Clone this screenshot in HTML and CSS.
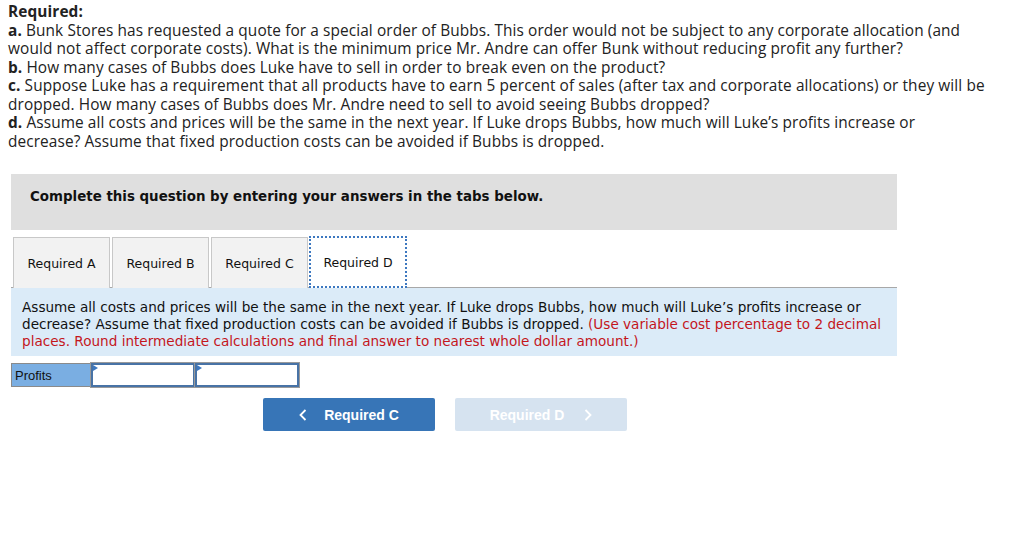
FILE: index.html
```html
<!DOCTYPE html>
<html>
<head>
<meta charset="utf-8">
<link rel="stylesheet" href="styles.css">
</head>
<body>
<div class="question">
  <div class="req-title">Required:</div>
  <div><b>a.</b> Bunk Stores has requested a quote for a special order of Bubbs. This order would not be subject to any corporate allocation (and would not affect corporate costs). What is the minimum price Mr. Andre can offer Bunk without reducing profit any further?</div>
  <div><b>b.</b> How many cases of Bubbs does Luke have to sell in order to break even on the product?</div>
  <div><b>c.</b> Suppose Luke has a requirement that all products have to earn 5 percent of sales (after tax and corporate allocations) or they will be dropped. How many cases of Bubbs does Mr. Andre need to sell to avoid seeing Bubbs dropped?</div>
  <div><b>d.</b> Assume all costs and prices will be the same in the next year. If Luke drops Bubbs, how much will Luke’s profits increase or decrease? Assume that fixed production costs can be avoided if Bubbs is dropped.</div>
</div>

<div class="panel">
  <div class="instructions">Complete this question by entering your answers in the tabs below.</div>
  <div class="tabs">
    <div class="tab">Required A</div>
    <div class="tab">Required B</div>
    <div class="tab">Required C</div>
    <div class="tab active">Required D</div>
  </div>
  <div class="prompt">Assume all costs and prices will be the same in the next year. If Luke drops Bubbs, how much will Luke’s profits increase or decrease? Assume that fixed production costs can be avoided if Bubbs is dropped. <span class="red">(Use variable cost percentage to 2 decimal places. Round intermediate calculations and final answer to nearest whole dollar amount.)</span></div>
  <div class="answer-row">
    <div class="label-cell">Profits</div>
    <div class="input-cell"><span class="flag"></span></div>
    <div class="input-cell"><span class="flag"></span></div>
  </div>
  <div class="nav">
    <div class="btn prev"><svg class="chev" width="8" height="12" viewBox="0 0 8 12"><path d="M6.5 1 L1.5 6 L6.5 11" fill="none" stroke="#ffffff" stroke-width="1.8"/></svg>Required C</div>
    <div class="btn next">Required D<svg class="chev right" width="8" height="12" viewBox="0 0 8 12"><path d="M1.5 1 L6.5 6 L1.5 11" fill="none" stroke="#ffffff" stroke-width="1.8"/></svg></div>
  </div>
</div>
</body>
</html>
```
FILE: styles.css
```css
html, body {
  margin: 0;
  padding: 0;
  background: #ffffff;
}
body {
  padding: 3px 8px 0 8px;
}
.question {
  font-family: "Open Sans", "Lato", sans-serif;
  font-size: 15.4px;
  line-height: 18.5px;
  letter-spacing: 0.1px;
  color: #222222;
  width: 980px;
}
.question b, .req-title {
  font-weight: bold;
}
.panel {
  margin-top: 23px;
  margin-left: 3px;
  width: 886px;
}
.instructions {
  background: #dfdfdf;
  height: 56px;
  box-sizing: border-box;
  padding: 14px 0 0 19px;
  font-family: "DejaVu Sans", Verdana, sans-serif;
  font-size: 13.4px;
  line-height: 17px;
  font-weight: bold;
  color: #111111;
}
.tabs {
  margin-top: 7px;
  display: flex;
  gap: 2px;
  padding-left: 2px;
  border-bottom: 1px solid #a8a8a8;
  height: 50px;
}
.tab {
  width: 97px;
  box-sizing: border-box;
  height: 51px;
  border: 1px solid #c8c8c8;
  border-bottom: none;
  background: #f2f2f2;
  display: flex;
  align-items: center;
  justify-content: center;
  padding-top: 1px;
  font-family: "DejaVu Sans", Verdana, sans-serif;
  font-size: 12.5px;
  color: #111111;
}
.tab.active {
  width: 98px;
  margin-left: -1px;
  height: 52px;
  margin-top: -1px;
  background: #ffffff;
  border: 2px dotted #3d78c0;
}
.prompt {
  background: #dbebf8;
  padding: 11px 11px 6px 11px;
  font-family: "DejaVu Sans", Verdana, sans-serif;
  font-size: 13.6px;
  line-height: 17px;
  color: #111111;
}
.red {
  color: #c4161c;
}
.answer-row {
  margin-top: 7px;
  display: flex;
  height: 24px;
}
.label-cell {
  width: 80px;
  box-sizing: border-box;
  background: #7aaee2;
  border: 1px solid #8a8a8a;
  font-family: "Liberation Sans", Arial, sans-serif;
  font-size: 13px;
  color: #111111;
  padding: 1px 0 0 3px;
  display: flex;
  align-items: center;
}
.input-cell {
  position: relative;
  width: 104px;
  box-sizing: border-box;
  border: 2px solid #4873a6;
  outline: 1px solid #9a9a9a;
  background: #ffffff;
}
.flag {
  position: absolute;
  left: 0;
  top: 0;
  width: 0;
  height: 0;
  border-top: 3px solid transparent;
  border-bottom: 3px solid transparent;
  border-left: 5px solid #3d78c0;
}
.nav {
  margin-top: 11px;
  display: flex;
  gap: 20px;
  padding-left: 252px;
}
.btn {
  width: 172px;
  height: 33px;
  box-sizing: border-box;
  display: flex;
  align-items: center;
  justify-content: center;
  font-family: "Liberation Sans", Arial, sans-serif;
  font-size: 14px;
  font-weight: bold;
  color: #ffffff;
  border-radius: 2px;
  padding-top: 1px;
}
.btn.prev {
  background: #3775b7;
}
.btn.next {
  background: #d6e3f0;
}
.chev {
  margin-right: 17px;
}
.chev.right {
  margin-right: 0;
  margin-left: 20px;
}
```
